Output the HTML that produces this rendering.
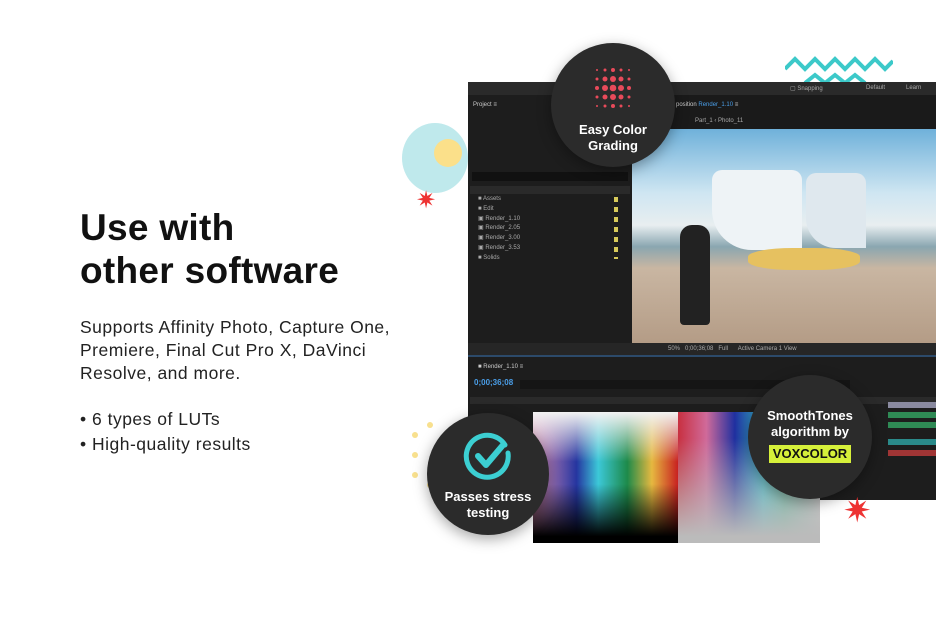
<!DOCTYPE html><html><head><style>
*{margin:0;padding:0;box-sizing:border-box}
body{width:936px;height:625px;background:#fff;position:relative;overflow:hidden;font-family:"Liberation Sans",sans-serif}
.a{position:absolute}
.c{position:absolute;border-radius:50%;background:#2b2b2b;box-shadow:0 4px 14px rgba(0,0,0,.35);color:#fff;text-align:center;font-weight:bold;font-size:13px;line-height:16px}
.t{font-size:6px;color:#aaa}
</style></head><body>
<div class="a" style="left:80px;top:206px;font-size:37px;font-weight:bold;line-height:43px;color:#111;letter-spacing:.3px">Use with<br>other software</div>
<div class="a" style="left:80px;top:316px;font-size:17.5px;line-height:23px;color:#222;letter-spacing:.5px">Supports Affinity Photo, Capture One,<br>Premiere, Final Cut Pro X, DaVinci<br>Resolve, and more.</div>
<div class="a" style="left:80px;top:407px;font-size:17.5px;line-height:25px;color:#222;letter-spacing:.5px">• 6 types of LUTs<br>• High-quality results</div>
<div class="a" style="left:402px;top:123px;width:66px;height:70px;border-radius:50%;background:#bfe9ec"></div>
<div class="a" style="left:434px;top:139px;width:28px;height:28px;border-radius:50%;background:#fbe08a"></div>
<div class="a" style="left:416px;top:186px;color:#e33;font-size:24px">✷</div>
<svg class="a" style="left:785px;top:55px" width="108" height="28"><polyline points="0,14 10,4 20,14 30,4 40,14 50,4 60,14 70,4 80,14 90,4 100,14 108,6" fill="none" stroke="#3cc9c9" stroke-width="4"/><polyline points="20,28 30,20 40,28 50,20 60,28 70,20 80,28" fill="none" stroke="#3cc9c9" stroke-width="4"/></svg>
<svg class="a" style="left:405px;top:395px" width="130" height="130"><g fill="#f8e08e">
<circle cx="10" cy="40" r="3"/><circle cx="10" cy="60" r="3"/><circle cx="10" cy="80" r="3"/><circle cx="25" cy="30" r="3"/><circle cx="25" cy="90" r="3"/><circle cx="40" cy="105" r="3"/><circle cx="55" cy="115" r="3"/><circle cx="75" cy="118" r="3"/><circle cx="95" cy="118" r="3"/><circle cx="115" cy="115" r="3"/></g></svg>
<div class="a" style="left:468px;top:82px;width:468px;height:418px;background:#1d1d1d"></div>
<div class="a" style="left:468px;top:82px;width:468px;height:13px;background:#2a2a2a"></div>
<div class="a t" style="left:790px;top:85px">▢ Snapping</div><div class="a t" style="left:866px;top:85px">Default</div><div class="a t" style="left:906px;top:85px">Learn</div>
<div class="a t" style="left:473px;top:102px;color:#ccc">Project ≡</div>
<div class="a" style="left:472px;top:172px;width:156px;height:9px;background:#111"></div>
<div class="a" style="left:470px;top:186px;width:160px;height:8px;background:#2a2a2a"></div>
<div class="a t" style="left:478px;top:195px;line-height:9.8px">■ Assets<br>■ Edit<br>▣ Render_1.10<br>▣ Render_2.05<br>▣ Render_3.00<br>▣ Render_3.53<br>■ Solids</div>
<div class="a" style="left:614px;top:197px;width:4px;height:62px;background:repeating-linear-gradient(#d7c95a 0 5px,transparent 5px 10px)"></div>
<div class="a" style="left:632px;top:95px;width:304px;height:34px;background:#1a1a1a"></div>
<div class="a t" style="left:676px;top:102px;color:#ccc">position <span style="color:#4a9ee8">Render_1.10</span> ≡</div>
<div class="a t" style="left:695px;top:118px">Part_1 ‹ Photo_11</div>
<div class="a" style="left:632px;top:129px;width:304px;height:214px;background:linear-gradient(#6fb1da 0%,#cfe6f2 30%,#e8eef0 45%,#8aa6b0 55%,#c9b6a2 65%,#b49c86 100%)"></div>
<div class="a" style="left:712px;top:170px;width:90px;height:80px;background:#eef3f6;border-radius:10px 10px 0 40px"></div>
<div class="a" style="left:806px;top:173px;width:60px;height:75px;background:#dfe8ee;border-radius:10px 10px 0 30px"></div>
<div class="a" style="left:748px;top:248px;width:112px;height:22px;background:#e6c160;border-radius:40%"></div>
<div class="a" style="left:680px;top:225px;width:30px;height:100px;background:#222;border-radius:12px 12px 4px 4px"></div>
<div class="a" style="left:468px;top:343px;width:468px;height:12px;background:#262626"></div>
<div class="a t" style="left:668px;top:346px">50% &nbsp; 0;00;36;08 &nbsp; Full &nbsp;&nbsp;&nbsp;&nbsp; Active Camera 1 View</div>
<div class="a" style="left:468px;top:355px;width:468px;height:2px;background:#2c4a6a"></div>
<div class="a t" style="left:478px;top:364px;color:#ccc">■ Render_1.10 ≡</div>
<div class="a" style="left:474px;top:378px;font-size:8px;color:#4a9ee8;font-weight:bold">0;00;36;08</div>
<div class="a" style="left:520px;top:380px;width:330px;height:9px;background:#151515"></div>
<div class="a" style="left:470px;top:397px;width:466px;height:7px;background:#2a2a2a"></div>
<div class="a" style="left:888px;top:402px;width:48px;height:6px;background:#8a8aa0"></div>
<div class="a" style="left:888px;top:412px;width:48px;height:6px;background:#2f8a55"></div>
<div class="a" style="left:888px;top:422px;width:48px;height:6px;background:#2f8a55"></div>
<div class="a" style="left:888px;top:439px;width:48px;height:6px;background:#2a8a8a"></div>
<div class="a" style="left:888px;top:450px;width:48px;height:6px;background:#a03535"></div>
<div class="a" style="left:533px;top:412px;width:145px;height:131px;background:linear-gradient(#f2f2f2 0%,rgba(242,242,242,0) 38%,rgba(0,0,0,0) 55%,#000 95%),linear-gradient(90deg,#e090b8,#2535a0 30%,#3cc8d8 45%,#1d8a4a 65%,#e6b840 82%,#c82020)"></div>
<div class="a" style="left:678px;top:412px;width:142px;height:131px;background:linear-gradient(rgba(180,180,180,0) 20%,#bbb 95%),linear-gradient(90deg,#c83040,#d06a9a 20%,#2030a0 40%,#38c0d0 60%,#50c0a0 75%,#ccc)"></div>
<div class="a" style="left:843px;top:494px;color:#e33;font-size:34px;line-height:34px">✷</div>
<div class="c" style="left:551px;top:43px;width:124px;height:124px;padding-top:23px">
<svg width="44" height="46" viewBox="0 0 44 46"><g fill="#e84a5a">
<circle cx="6" cy="4" r="1"/><circle cx="14" cy="4" r="1.5"/><circle cx="22" cy="4" r="2"/><circle cx="30" cy="4" r="1.5"/><circle cx="38" cy="4" r="1"/>
<circle cx="6" cy="13" r="1.5"/><circle cx="14" cy="13" r="2.5"/><circle cx="22" cy="13" r="3"/><circle cx="30" cy="13" r="2.5"/><circle cx="38" cy="13" r="1.5"/>
<circle cx="6" cy="22" r="2"/><circle cx="14" cy="22" r="3"/><circle cx="22" cy="22" r="3.3"/><circle cx="30" cy="22" r="3"/><circle cx="38" cy="22" r="2"/>
<circle cx="6" cy="31" r="1.5"/><circle cx="14" cy="31" r="2.5"/><circle cx="22" cy="31" r="3"/><circle cx="30" cy="31" r="2.5"/><circle cx="38" cy="31" r="1.5"/>
<circle cx="6" cy="40" r="1"/><circle cx="14" cy="40" r="1.5"/><circle cx="22" cy="40" r="2"/><circle cx="30" cy="40" r="1.5"/><circle cx="38" cy="40" r="1"/></g></svg>
<div style="margin-top:6px">Easy Color<br>Grading</div></div>
<div class="c" style="left:427px;top:413px;width:122px;height:122px;padding-top:18px">
<svg width="50" height="50" viewBox="0 0 50 50"><path d="M42 14A21 21 0 1 0 45 22" fill="none" stroke="#3ccfd2" stroke-width="5" stroke-linecap="round"/><path d="M15 25l8 9 17-20" fill="none" stroke="#3ccfd2" stroke-width="6" stroke-linecap="round" stroke-linejoin="round"/></svg>
<div style="margin-top:4px">Passes stress<br>testing</div></div>
<div class="c" style="left:748px;top:375px;width:124px;height:124px;padding-top:33px">SmoothTones<br>algorithm by<div style="display:inline-block;margin-top:5px;background:#d6f03a;color:#111;padding:1px 4px">VOXCOLOR</div></div>
</body></html>
